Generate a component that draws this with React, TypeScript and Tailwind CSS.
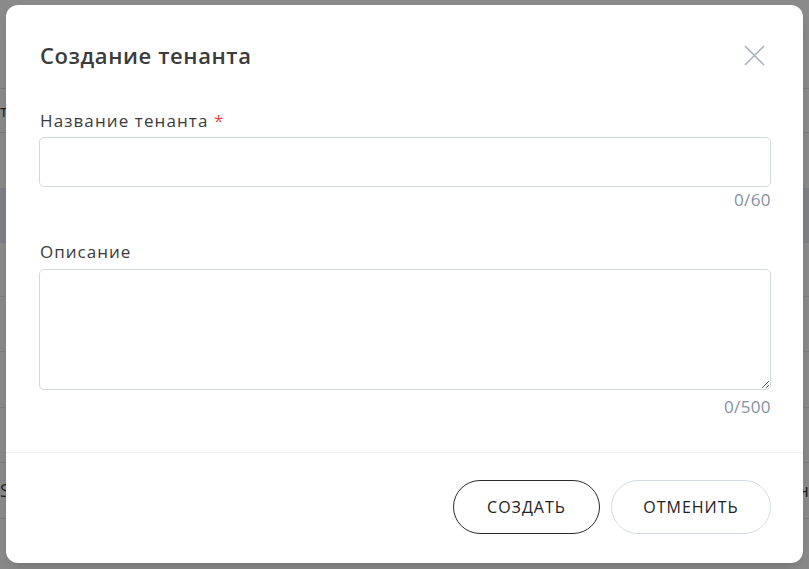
import React from "react";

function BackdropRows() {
  // страница под модальным окном, видна только по краям
  return (
    <div className="flex flex-col text-[#1f1f1f]">
      <div className="h-[88px]" />
      <div className="h-[44px] border-t border-[#7a7a7a] flex items-center text-[16px]">т</div>
      <div className="h-[56px] border-t border-[#7a7a7a]" />
      <div className="h-[55px] bg-[#7f8085]" />
      <div className="h-[53px]" />
      <div className="h-[55px] border-t border-[#7d7d7d]" />
      <div className="h-[56px] border-t border-[#7d7d7d]" />
      <div className="h-[55px] border-t border-[#7d7d7d]" />
      <div className="h-[56px] border-t border-[#7d7d7d] flex items-center justify-between text-[18px]">
        <span>S</span>
        <span>н</span>
      </div>
      <div className="flex-1 border-t border-[#7d7d7d]" />
    </div>
  );
}

export default function App() {
  return (
    <div
      className="relative w-[809px] h-[569px] overflow-hidden bg-[#8a8a8a]"
      style={{ fontFamily: '"Open Sans", "Noto Sans", sans-serif' }}
    >
      <BackdropRows />

      <div className="absolute left-[6px] top-[5px] w-[797px] h-[558px] bg-white rounded-[12px] flex flex-col shadow-lg">
        {/* Заголовок */}
        <div className="flex items-center justify-between pl-[34px] pr-[38px] pt-[36px]">
          <h2 className="text-[22px] leading-[28px] font-semibold text-[#3b3b3b] tracking-[0.6px]">
            Создание тенанта
          </h2>
          <button aria-label="Закрыть" className="text-[#a3adbb]">
            <svg className="w-[21px] h-[21px]" viewBox="0 0 22 22" fill="none" stroke="currentColor" strokeWidth={1.6}>
              <path d="M1 1l20 20M21 1L1 21" />
            </svg>
          </button>
        </div>

        {/* Форма */}
        <div className="flex flex-col pl-[33px] pr-[32px] pt-[40px]">
          <label className="text-[17px] leading-[24px] text-[#3a3a3a] pl-[1px] tracking-[1.1px]">
            Название тенанта <span className="text-[#ef4444]">*</span>
          </label>
          <input className="mt-[4px] h-[50px] rounded-[5px] border border-[#d3d8e0] outline-none px-3" />
          <div className="text-right text-[17px] leading-[22px] text-[#8590a2] mt-[2px] tracking-[0.4px]">0/60</div>

          <label className="mt-[29px] text-[17px] leading-[24px] text-[#3a3a3a] pl-[1px] tracking-[1px]">
            Описание
          </label>
          <textarea className="mt-[5px] h-[121px] rounded-[5px] border border-[#d3d8e0] outline-none px-3 py-2 resize-y" />
          <div className="text-right text-[17px] leading-[22px] text-[#8590a2] mt-[6px] tracking-[0.4px]">0/500</div>
        </div>

        <div className="mt-[34px] border-t border-[#eeeff1]" />

        {/* Кнопки */}
        <div className="flex justify-end gap-[11px] pr-[32px] pt-[27px]">
          <button className="h-[54px] w-[147px] rounded-full border border-[#2b2b2b] text-[16px] tracking-[1px] text-[#222]">
            СОЗДАТЬ
          </button>
          <button className="h-[54px] w-[160px] rounded-full border border-[#d5dbe6] text-[16px] tracking-[1px] text-[#222]">
            ОТМЕНИТЬ
          </button>
        </div>
      </div>
    </div>
  );
}
